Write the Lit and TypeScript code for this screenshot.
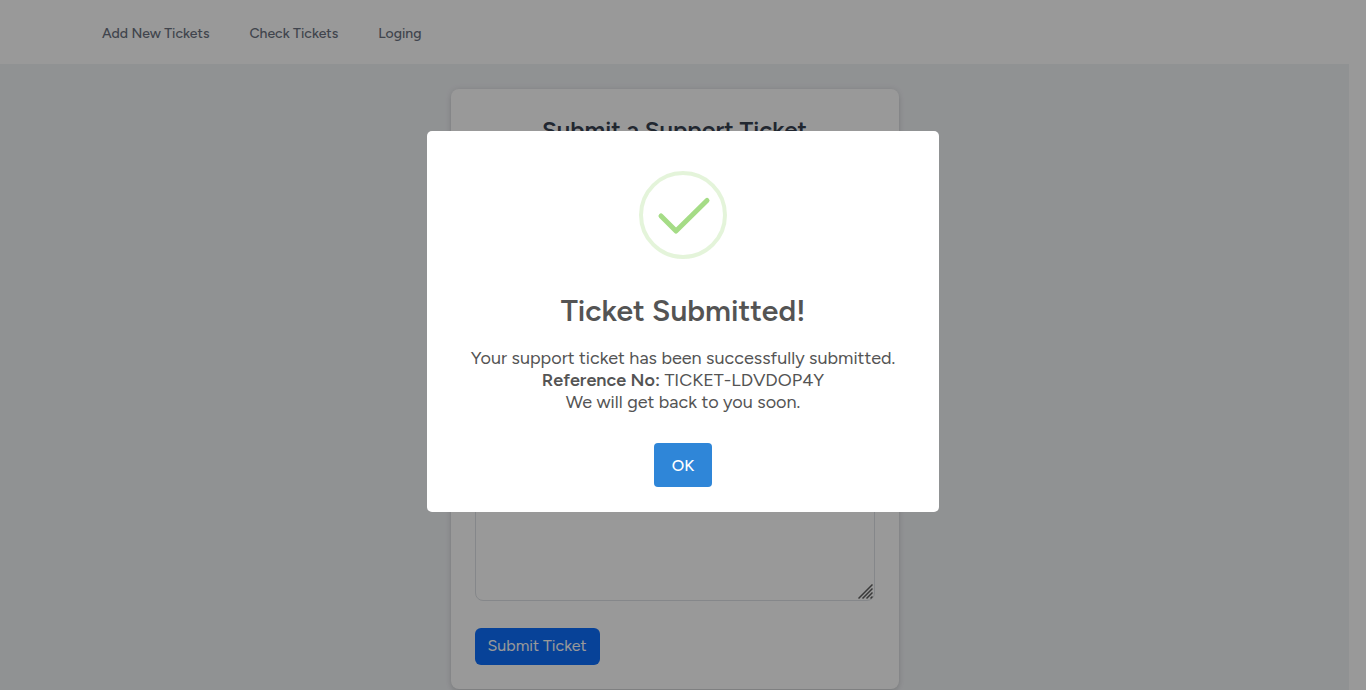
import { LitElement, html, css } from "lit";
import { customElement, state } from "lit/decorators.js";

@customElement("ticket-dialog")
class TicketDialog extends LitElement {
  static styles = css`
    .backdrop {
      position: fixed;
      inset: 0;
      z-index: 10;
      display: grid;
      place-items: center;
      padding: 0 12px 47px;
      background: rgba(0, 0, 0, 0.4);
    }
    .popup {
      box-sizing: border-box;
      display: flex;
      flex-direction: column;
      align-items: center;
      width: 100%;
      max-width: 512px;
      padding: 40px 20px 25px;
      border-radius: 5px;
      background: #fff;
      color: #545454;
      text-align: center;
    }
    .icon {
      display: block;
      width: 88px;
      height: 88px;
    }
    .title {
      margin: 34px 0 18px;
      font-size: 30px;
      font-weight: 600;
      line-height: 36px;
    }
    .message {
      margin: 0 0 30px;
      font-size: 18px;
      line-height: 22px;
    }
    .reference {
      font-weight: 600;
    }
    .confirm {
      height: 44px;
      padding: 0 18px;
      border: 0;
      border-radius: 4px;
      background: #2f86d8;
      color: #fff;
      font-family: inherit;
      font-size: 16px;
      font-weight: 500;
    }
  `;

  render() {
    return html`
      <div class="backdrop">
        <div class="popup" role="dialog" aria-modal="true" aria-labelledby="title">
          <svg class="icon" viewBox="0 0 88 88" fill="none" aria-hidden="true">
            <circle cx="44" cy="44" r="42" stroke="#a5dc86" stroke-opacity=".3" stroke-width="4" />
            <path d="M22 45 L37 60 L68 29.500" stroke="#a5dc86" stroke-width="5" stroke-linecap="round" stroke-linejoin="round" />
          </svg>
          <h2 class="title" id="title">Ticket Submitted!</h2>
          <p class="message">
            Your support ticket has been successfully submitted.<br />
            <b class="reference">Reference No:</b> TICKET-LDVDOP4Y<br />
            We will get back to you soon.
          </p>
          <button class="confirm" type="button" @click=${() => this.dispatchEvent(new Event("confirm"))}>OK</button>
        </div>
      </div>
    `;
  }
}

@customElement("app-root")
class AppRoot extends LitElement {
  static styles = css`
    :host {
      display: block;
      font-family: Figtree, Lato, sans-serif;
      background: #fff;
    }
    .nav {
      display: flex;
      align-items: center;
      gap: 40px;
      box-sizing: border-box;
      height: 64px;
      padding: 4px 102px 0;
    }
    .link {
      color: #6b7280;
      font-size: 14px;
      font-weight: 500;
      line-height: 20px;
      text-decoration: none;
    }
    .page {
      margin-right: 17px;
      padding: 25px 16px 1px;
      background: #f1f3f6;
    }
    .card {
      box-sizing: border-box;
      max-width: 448px;
      margin: 0 auto;
      padding: 24px;
      border-radius: 8px;
      background: #fff;
      box-shadow: 0 4px 6px -1px rgba(0, 0, 0, 0.1), 0 0 6px rgba(0, 0, 0, 0.1);
    }
    .heading {
      margin: 0 0 24px;
      color: #374151;
      font-size: 24px;
      font-weight: 600;
      line-height: 34px;
      text-align: center;
    }
    .field {
      display: grid;
      margin: 0 0 27px;
    }
    .details,
    .grip {
      grid-area: 1 / 1;
    }
    .details {
      box-sizing: border-box;
      width: 100%;
      height: 430px;
      margin: 0;
      padding: 8px 12px;
      border: 1px solid #dee2e6;
      border-radius: 8px;
      background: #fff;
      font-family: inherit;
      font-size: 16px;
      resize: none;
    }
    .grip {
      place-self: end;
      width: 15px;
      height: 15px;
      margin: 0 2px 2px 0;
      pointer-events: none;
    }
    .submit {
      display: block;
      height: 37px;
      padding: 0 13px 2px;
      border: 0;
      border-radius: 6px;
      background: #0d6efd;
      color: #fff;
      font-family: inherit;
      font-size: 16px;
    }
  `;

  @state() private dialogOpen = true;

  render() {
    return html`
      <nav class="nav">
        <a class="link" href="#new">Add New Tickets</a>
        <a class="link" href="#check">Check Tickets</a>
        <a class="link" href="#login">Loging</a>
      </nav>
      <main class="page">
        <form class="card" @submit=${(e: Event) => e.preventDefault()}>
          <h1 class="heading" id="heading">Submit a Support Ticket</h1>
          <div class="field">
            <textarea class="details" aria-labelledby="heading"></textarea>
            <svg class="grip" viewBox="0 0 15 15" fill="none" stroke="#606060" stroke-width="1.500" aria-hidden="true">
              <path d="M.5 14.500 14.500.5 M4.500 14.500 14.500 4.500 M8.500 14.500 14.500 8.500 M12.500 14.500 14.500 12.500" />
            </svg>
          </div>
          <button class="submit" type="submit">Submit Ticket</button>
        </form>
      </main>
      ${this.dialogOpen
        ? html`<ticket-dialog @confirm=${() => (this.dialogOpen = false)}></ticket-dialog>`
        : null}
    `;
  }
}
